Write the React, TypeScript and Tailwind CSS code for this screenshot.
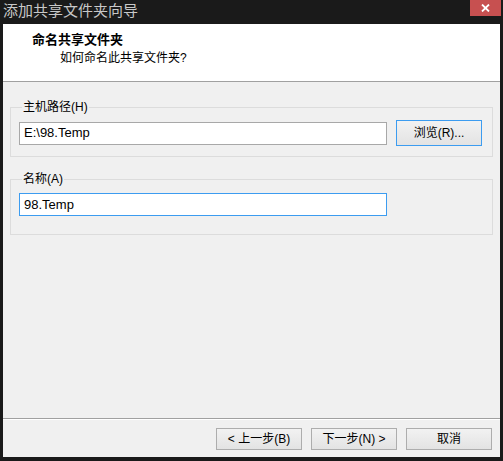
import React from 'react';

const font = "font-['Liberation_Sans','Noto_Sans_CJK_SC',sans-serif]";

const WizardButton: React.FC<{ label: string; focused?: boolean; tall?: boolean }> = ({ label, focused, tall }) => (
  <button
    type="button"
    className={`w-[86px] flex items-center justify-center text-[12px] text-black border bg-gradient-to-b from-[#f2f2f2] to-[#e3e3e3] ${
      tall ? 'h-[26px]' : 'h-[22px]'
    } ${focused ? 'border-[#3c9cf0]' : 'border-[#adadad]'}`}
  >
    {label}
  </button>
);

const App: React.FC = () => {
  return (
    <div className={`w-[503px] h-[461px] bg-[#1a1a1a] flex flex-col ${font}`}>
      {/* title bar */}
      <div className="h-[24px] flex items-start justify-between shrink-0">
        <div className="pl-[3px] pt-[2px] text-[15px] leading-[18px] text-[#c8c8c8]">添加共享文件夹向导</div>
        <div className="w-[31px] h-[16px] mr-[2px] bg-[#c75050] flex items-center justify-center">
          <svg width="9" height="8" viewBox="0 0 9 8">
            <path d="M1 0.5 L8 7.5 M8 0.5 L1 7.5" stroke="#ffffff" strokeWidth="1.8" />
          </svg>
        </div>
      </div>

      {/* client area */}
      <div className="flex-1 mx-[3px] mb-[4px] bg-[#f0f0f0] flex flex-col">
        <div className="h-[58px] bg-white border-b border-[#a0a0a0] pl-[29px] pt-[8px] shrink-0">
          <div className="text-[13px] leading-[16px] font-bold text-black">命名共享文件夹</div>
          <div className="mt-[2px] pl-[28px] text-[12px] leading-[16px] text-black">如何命名此共享文件夹?</div>
        </div>

        <div className="px-[7px] pt-[17px] flex flex-col gap-[14px]">
          <fieldset className="border border-[#dcdcdc] pl-[8px] pr-[10px] pt-[5px] pb-[10px]">
            <legend className="ml-[3px] px-[1px] text-[12px] leading-[16px] text-black">主机路径(H)</legend>
            <div className="flex items-center gap-[9px]">
              <div className="w-[368px] h-[23px] bg-white border border-[#a8a8a8] flex items-center pl-[4px] text-[13px] text-black">
                E:\98.Temp
              </div>
              <WizardButton label="浏览(R)..." focused tall />
            </div>
          </fieldset>

          <fieldset className="border border-[#dcdcdc] pl-[8px] pr-[10px] pt-[6px] pb-[18px]">
            <legend className="ml-[3px] px-[1px] text-[12px] leading-[16px] text-black">名称(A)</legend>
            <div className="w-[368px] h-[23px] bg-white border border-[#3c9cf0] flex items-center pl-[4px] text-[13px] text-black">
              98.Temp
            </div>
          </fieldset>
        </div>

        <div className="flex-1" />

        <div className="border-t border-[#a0a0a0] shrink-0">
          <div className="border-t border-white flex justify-end gap-[9px] pr-[8px] pt-[8px] pb-[7px]">
            <WizardButton label="< 上一步(B)" />
            <WizardButton label="下一步(N) >" />
            <WizardButton label="取消" />
          </div>
        </div>
      </div>
    </div>
  );
};

export default App;
